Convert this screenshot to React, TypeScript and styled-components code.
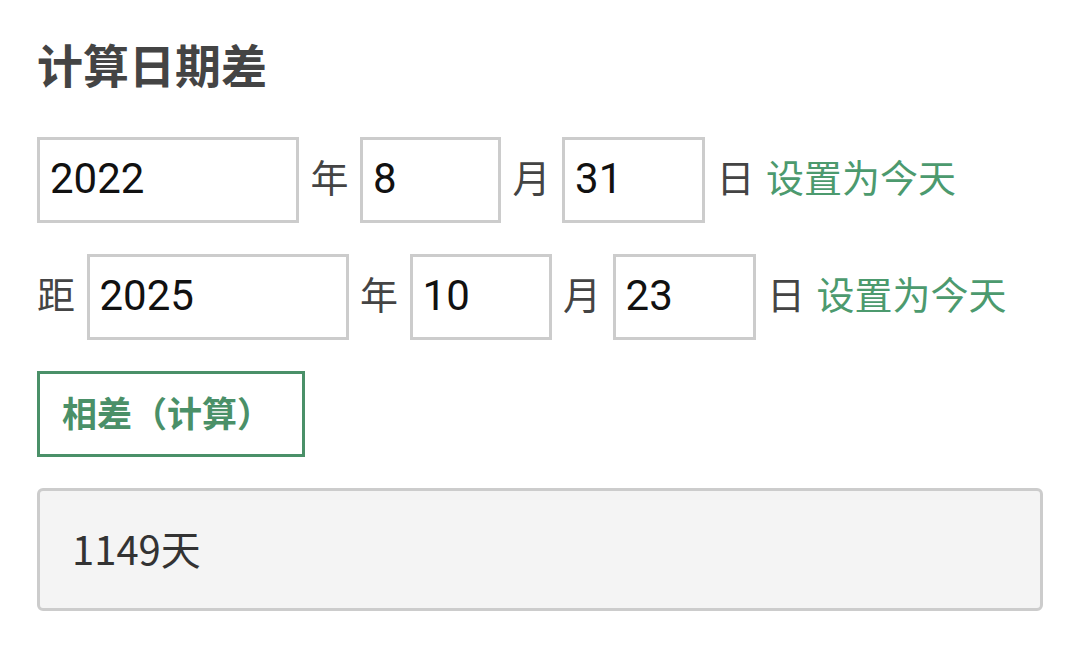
import React from "react";
import styled, { createGlobalStyle } from "styled-components";

const GlobalStyle = createGlobalStyle`
  html, body { margin: 0; padding: 0; background: #ffffff; }
  body { font-family: "Noto Sans CJK SC", "Noto Sans", sans-serif; }
  * { box-sizing: border-box; }
`;

const Page = styled.div`
  padding: 36px 0 0 37px;
  width: 1080px;
`;

const Title = styled.h1`
  margin: 0 0 46px 0;
  height: 55px;
  font-size: 46px;
  line-height: 55px;
  font-weight: 700;
  color: #444444;
  font-family: "Noto Sans CJK SC", sans-serif;
`;

const Row = styled.div`
  display: flex;
  align-items: center;
  gap: 11.5px;
  height: 86px;
  margin-bottom: 31px;
`;

const DateInput = styled.input<{ $w: number }>`
  width: ${(p) => p.$w}px;
  height: 86px;
  border: 3px solid #cccccc;
  border-radius: 0;
  padding: 0 0 3px 10px;
  margin: 0;
  font-family: Roboto, "Noto Sans", sans-serif;
  font-size: 42px;
  color: #111111;
  background: #ffffff;
  outline: none;
`;

const Label = styled.span`
  font-size: 38px;
  line-height: 1;
  margin-bottom: 8px;
  color: #444444;
  font-family: "Noto Sans CJK SC", sans-serif;
`;

const TodayLink = styled.a`
  font-size: 38px;
  line-height: 1;
  margin-bottom: 8px;
  color: #4c9a6e;
  text-decoration: none;
  font-family: "Noto Sans CJK SC", sans-serif;
  cursor: pointer;
`;

const CalcButton = styled.button`
  display: flex;
  align-items: center;
  width: 268px;
  height: 86px;
  margin: 0 0 31px 0;
  padding: 0 0 6px 22px;
  border: 3px solid #4a9068;
  border-radius: 0;
  background: #ffffff;
  color: #4a9068;
  font-family: "Noto Sans CJK SC", sans-serif;
  font-size: 35px;
  font-weight: 700;
  cursor: pointer;
`;

const Result = styled.div`
  display: flex;
  align-items: center;
  width: 1006px;
  height: 123px;
  padding: 0 32px 4px 32px;
  background: #f4f4f4;
  border: 3px solid #cccccc;
  border-radius: 6px;
  font-family: "Noto Sans CJK SC", sans-serif;
  font-size: 40px;
  color: #333333;
`;

type Field = { value: string; w: number };

function DateRow({ prefix, fields }: { prefix?: string; fields: Field[] }) {
  const units = ["年", "月", "日"];
  return (
    <Row>
      {prefix && <Label>{prefix}</Label>}
      {fields.map((f, i) => (
        <React.Fragment key={i}>
          <DateInput $w={f.w} defaultValue={f.value} />
          <Label>{units[i]}</Label>
        </React.Fragment>
      ))}
      <TodayLink>设置为今天</TodayLink>
    </Row>
  );
}

export default function App() {
  return (
    <>
      <GlobalStyle />
      <Page>
        <Title>计算日期差</Title>
        <DateRow
          fields={[
            { value: "2022", w: 262 },
            { value: "8", w: 141 },
            { value: "31", w: 143 },
          ]}
        />
        <DateRow
          prefix="距"
          fields={[
            { value: "2025", w: 262 },
            { value: "10", w: 142 },
            { value: "23", w: 143 },
          ]}
        />
        <CalcButton>相差（计算）</CalcButton>
        <Result>1149天</Result>
      </Page>
    </>
  );
}
